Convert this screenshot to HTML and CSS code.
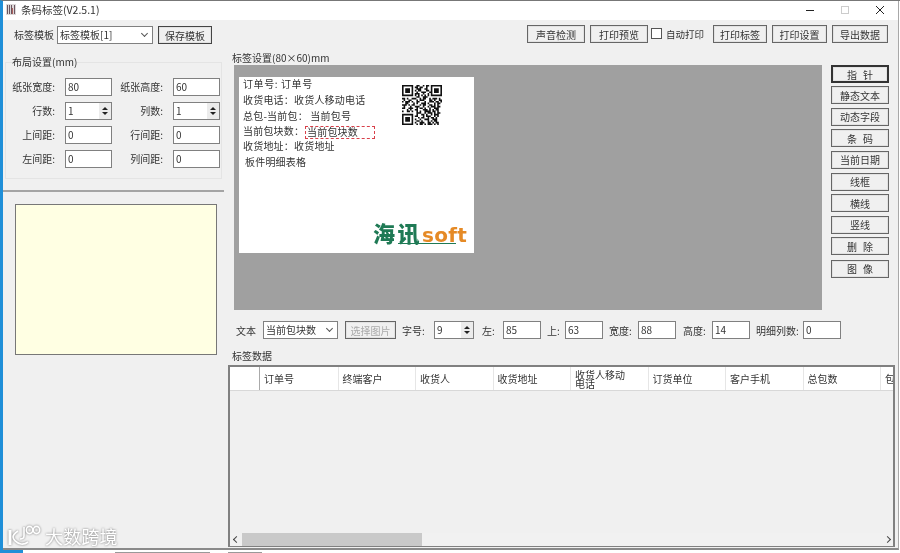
FILE: index.html
```html
<!DOCTYPE html>
<html lang="zh-CN">
<head>
    <meta charset="UTF-8">
    <meta name="viewport" content="width=device-width, initial-scale=1.0">
    <title>条码标签(V2.5.1)</title>
    <link rel="stylesheet" href="styles.css">
</head>
<body>
  <div class="window">
    <div class="titlebar">
      <svg class="app_icon" width="10" height="11" viewBox="0 0 10 11">
        <rect x="0" y="0" width="10" height="11" fill="#dcd8d8"/>
        <path d="M1.5 1v9M3.5 1v9M5.5 1v9M8.5 1v9" stroke="#6a5560" stroke-width="1"/>
        <path d="M6.5 4v6" stroke="#b0605d" stroke-width="1"/>
      </svg>
      <span class="app_title">条码标签(V2.5.1)</span>
      <div class="win_btns">
        <svg width="10" height="10" viewBox="0 0 10 10"><path d="M1 5.5h8" stroke="#222"/></svg>
        <svg width="10" height="10" viewBox="0 0 10 10"><rect x="1.5" y="1.5" width="7" height="7" fill="none" stroke="#ccc"/></svg>
        <svg width="10" height="10" viewBox="0 0 10 10"><path d="M1 1l8 8M9 1l-8 8" stroke="#222"/></svg>
      </div>
    </div>

    <div class="toolbar">
      <span class="tpl_label">标签模板</span>
      <div class="select tpl_select">标签模板[1]<i class="caret"></i></div>
      <button class="btn save_btn">保存模板</button>
      <div class="toolbar_right">
        <button class="btn w58">声音检测</button>
        <button class="btn w58">打印预览</button>
        <label class="auto_print"><i class="check"></i>自动打印</label>
        <button class="btn w54">打印标签</button>
        <button class="btn w55">打印设置</button>
        <button class="btn w56">导出数据</button>
      </div>
    </div>

    <div class="main">
      <div class="left_pane">
        <fieldset class="layout_box">
          <legend>布局设置(mm)</legend>
          <div class="layout_grid">
            <span>纸张宽度:</span><div class="input">80</div>
            <span>纸张高度:</span><div class="input">60</div>
            <span>行数:</span><div class="input spin">1<div class="spin_btns"><i class="up"></i><i class="down"></i></div></div>
            <span>列数:</span><div class="input spin">1<div class="spin_btns"><i class="up"></i><i class="down"></i></div></div>
            <span>上间距:</span><div class="input">0</div>
            <span>行间距:</span><div class="input">0</div>
            <span>左间距:</span><div class="input">0</div>
            <span>列间距:</span><div class="input">0</div>
          </div>
        </fieldset>
        <div class="left_sep"></div>
        <div class="preview_box"></div>
      </div>

      <div class="right_pane">
        <div class="section_title">标签设置(80×60)mm</div>
        <div class="design_row">
          <div class="canvas">
            <div class="label_page">
              <span class="field f1">订单号: 订单号</span>
              <span class="field f2">收货电话：收货人移动电话</span>
              <span class="field f3">总包-当前包： 当前包号</span>
              <span class="field f4">当前包块数：</span>
              <span class="field f4b">当前包块数</span>
              <span class="field f5">收货地址：收货地址</span>
              <span class="field f6">板件明细表格</span>
              <svg class="qr" width="40" height="40" viewBox="0 0 25 25">
                <path fill="none" stroke="#111" stroke-width="1" d="M0 .5h7m2 0h2m2 0h1m1 0h2m1 0h7M0 1.5h1m5 0h1m1 0h2m1 0h2m2 0h1m2 0h1m5 0h1M0 2.5h1m1 0h3m1 0h1m2 0h3m2 0h2m2 0h1m1 0h3m1 0h1M0 3.5h1m1 0h3m1 0h1m1 0h1m1 0h2m3 0h2m1 0h1m1 0h3m1 0h1M0 4.5h1m1 0h3m1 0h1m2 0h1m2 0h3m2 0h2m1 0h3m1 0h1M0 5.5h1m5 0h1m1 0h3m2 0h1m2 0h1m1 0h1m5 0h1M0 6.5h7m1 0h1m1 0h1m1 0h1m1 0h1m1 0h1m1 0h7M9 7.5h2m2 0h3M0 8.5h2m1 0h1m2 0h3m2 0h1m1 0h2m2 0h1m1 0h3m1 0h1M1 9.5h1m2 0h2m3 0h1m1 0h3m3 0h2m1 0h1m2 0h2M0 10.5h1m1 0h3m1 0h1m2 0h2m3 0h1m2 0h3m1 0h2m1 0h1M2 11.5h2m3 0h1m1 0h1m2 0h3m1 0h1m3 0h1m1 0h2M0 12.5h3m1 0h1m1 0h2m3 0h1m1 0h2m2 0h2m1 0h1m1 0h1M1 13.5h1m3 0h1m2 0h3m2 0h1m2 0h1m1 0h3m1 0h2M0 14.5h2m2 0h3m2 0h1m1 0h2m1 0h1m2 0h1m2 0h3M3 15.5h1m1 0h1m2 0h2m3 0h3m1 0h1m1 0h1m1 0h2M0 16.5h1m2 0h2m1 0h1m2 0h1m1 0h1m2 0h4m1 0h2m1 0h1M9 17.5h3m2 0h1m1 0h3m1 0h1m1 0h2M0 18.5h7m2 0h1m2 0h2m1 0h1m2 0h1m1 0h3M0 19.5h1m5 0h1m1 0h2m3 0h1m1 0h3m2 0h1m1 0h1M0 20.5h1m1 0h3m1 0h1m3 0h1m1 0h2m2 0h1m1 0h2m1 0h1M0 21.5h1m1 0h3m1 0h1m1 0h1m2 0h1m2 0h3m2 0h3M0 22.5h1m1 0h3m1 0h1m2 0h2m1 0h1m3 0h1m1 0h1m1 0h2M0 23.5h1m5 0h1m1 0h1m2 0h3m2 0h2m1 0h1m1 0h2M0 24.5h7m2 0h1m1 0h2m1 0h1m1 0h3m1 0h1m1 0h1"/>
              </svg>
              <div class="logo"><span class="logo_cn">海讯</span><span class="logo_en">soft</span></div>
            </div>
          </div>
          <div class="tools">
            <button class="btn tool active">指 针</button>
            <button class="btn tool">静态文本</button>
            <button class="btn tool">动态字段</button>
            <button class="btn tool">条 码</button>
            <button class="btn tool">当前日期</button>
            <button class="btn tool mt1">线框</button>
            <button class="btn tool">横线</button>
            <button class="btn tool">竖线</button>
            <button class="btn tool">删 除</button>
            <button class="btn tool mt1">图 像</button>
          </div>
        </div>

        <div class="props">
          <span>文本</span>
          <div class="select prop_select">当前包块数<i class="caret"></i></div>
          <button class="btn pic_btn" disabled>选择图片</button>
          <span class="lb32 ml6">字号:</span>
          <div class="input spin w40">9<div class="spin_btns"><i class="up"></i><i class="down"></i></div></div>
          <span class="lb21 ml8">左:</span>
          <div class="input w38">85</div>
          <span class="lb18 ml6">上:</span>
          <div class="input w38">63</div>
          <span class="lb29 ml6">宽度:</span>
          <div class="input w38">88</div>
          <span class="lb29 ml7">高度:</span>
          <div class="input w38">14</div>
          <span class="lb47 ml6">明细列数:</span>
          <div class="input w38">0</div>
        </div>

        <div class="section_title data_title">标签数据</div>
        <div class="data_grid">
          <div class="grid_head">
            <div class="cell first"></div>
            <div class="cell">订单号</div>
            <div class="cell">终端客户</div>
            <div class="cell">收货人</div>
            <div class="cell">收货地址</div>
            <div class="cell wrap">收货人移动电话</div>
            <div class="cell">订货单位</div>
            <div class="cell">客户手机</div>
            <div class="cell">总包数</div>
            <div class="cell">包</div>
          </div>
          <div class="grid_body"></div>
          <div class="hscroll">
            <span class="arrow_l"></span>
            <div class="track"><div class="thumb"></div></div>
            <span class="arrow_r"></span>
          </div>
        </div>
      </div>
    </div>
  </div>

  <div class="desktop_strip">
    <i class="strip_blue"></i>
    <i class="strip_ink ink1"></i>
    <i class="strip_ink ink2"></i>
  </div>

  <div class="watermark">
    <svg width="33" height="22" viewBox="0 0 33 22" fill="none" stroke="#fff" stroke-width="1.6">
      <path d="M2 5v15" stroke-width="3"/>
      <path d="M10 6c-3 2-5 4-5 6s3 6 8 7c3 .5 5-.5 7-2"/>
      <path d="M16 2v9c0 2-2 3-4 3"/>
      <ellipse cx="21.5" cy="5" rx="3.2" ry="3.6"/>
      <ellipse cx="28.5" cy="5" rx="3.2" ry="3.6"/>
    </svg>
    <span>大数跨境</span>
  </div>
</body>
</html>
```

FILE: styles.css
```css
*{
  box-sizing: border-box;
}

html, body{
  margin: 0;
  height: 100%;
  overflow: hidden;
}

body{
  width: 900px;
  height: 553px;
  background-color: #fff;
  font-family: "Noto Sans CJK SC", "Liberation Sans", sans-serif;
  font-size: 10px;
  color: #333;
  position: relative;
  border-left: 3px solid #1f8fd8;
  border-top: 1px solid #777;
}

.window{
  width: 896px;
  height: 549px;
  background-color: #f0f0f0;
  border-right: 1px solid #a8a8a8;
  border-bottom: 2px solid #8a8a8a;
  filter: blur(0.45px);
  overflow: hidden;
}

.titlebar{
  height: 19px;
  background-color: #fff;
  display: flex;
  align-items: center;
  padding: 0 0 2px 3px;
}

.app_title{
  margin-left: 5px;
  font-size: 10.5px;
  color: #333;
}

.win_btns{
  margin-left: auto;
  display: flex;
  gap: 25px;
  margin-right: 13px;
}

.toolbar{
  height: 32px;
  display: flex;
  align-items: flex-start;
  padding-top: 6px;
  padding-right: 10px;
}

.tpl_label{
  margin-left: 11px;
  width: 43px;
  line-height: 17px;
}

.select{
  position: relative;
  height: 18px;
  line-height: 16px;
  background-color: #fff;
  border: 1px solid #808080;
  padding-left: 2px;
  white-space: nowrap;
}

.tpl_select{
  width: 96px;
}

.prop_select{
  width: 75px;
}

.caret{
  position: absolute;
  right: 5px;
  top: 4px;
  width: 5px;
  height: 5px;
  border-right: 1px solid #555;
  border-bottom: 1px solid #555;
  transform: rotate(45deg);
}

.btn{
  font-family: inherit;
  font-size: 10px;
  color: #333;
  height: 18px;
  padding: 0;
  background-color: #f0f0f0;
  border: 1px solid #666;
  box-shadow: inset 0 0 0 1px #e2e2e2;
}

.save_btn{
  margin-left: 5px;
  width: 54px;
  border-color: #444;
}

.toolbar_right{
  margin-left: auto;
  display: flex;
  align-items: flex-start;
  gap: 5px;
  margin-top: -1px;
}

.w58{ width: 58px; }
.w54{ width: 54px; }
.w55{ width: 55px; }
.w56{ width: 56px; }

.auto_print{
  display: flex;
  align-items: center;
  height: 15px;
  gap: 4px;
  width: 57px;
  margin-left: -2px;
  margin-top: 1px;
  font-size: 9.5px;
  white-space: nowrap;
}

.check{
  width: 11px;
  height: 11px;
  flex: none;
  background-color: #fff;
  border: 1px solid #555;
}

.main{
  display: flex;
  height: 496px;
}

.left_pane{
  width: 221px;
  padding-top: 5px;
}

.layout_box{
  margin: 0 2px;
  padding: 0;
  height: 122px;
  border: 1px solid #e4e4e4;
}

.layout_box legend{
  margin-left: 6px;
  padding: 0;
  line-height: 10px;
}

.layout_grid{
  display: grid;
  grid-template-columns: 59px 47px 61px 47px;
  grid-auto-rows: 18px;
  row-gap: 6px;
  margin-top: 11px;
}

.layout_grid span{
  text-align: right;
  padding-right: 10px;
  line-height: 17px;
  white-space: nowrap;
}

.input{
  position: relative;
  height: 18px;
  line-height: 16px;
  padding-left: 2px;
  background-color: #fff;
  border: 1px solid #808080;
}

.spin_btns{
  position: absolute;
  right: 0;
  top: 0;
  bottom: 0;
  width: 12px;
  background-color: #ececec;
  display: flex;
  flex-direction: column;
  align-items: center;
  justify-content: center;
  gap: 2px;
}

.up{
  border-left: 3px solid transparent;
  border-right: 3px solid transparent;
  border-bottom: 3px solid #222;
}

.down{
  border-left: 3px solid transparent;
  border-right: 3px solid transparent;
  border-top: 3px solid #222;
}

.left_sep{
  height: 2px;
  margin-top: 11px;
  background-color: #a4a4a4;
}

.preview_box{
  width: 202px;
  height: 151px;
  margin: 12px 0 0 12px;
  background-color: #ffffe3;
  border: 1px solid #777;
}

.right_pane{
  flex: 1;
  min-width: 0;
}

.section_title{
  height: 13px;
  line-height: 12px;
  padding-left: 8px;
}

.design_row{
  display: flex;
}

.canvas{
  width: 588px;
  height: 245px;
  margin-left: 10px;
  padding: 12px 0 0 5px;
  background-color: #a0a0a0;
}

.label_page{
  position: relative;
  width: 235px;
  height: 176px;
  background-color: #fff;
}

.field{
  position: absolute;
  left: 4px;
  line-height: 12px;
  letter-spacing: .2px;
  white-space: nowrap;
}

.f1{ top: 1px; letter-spacing: .6px; }
.f2{ top: 17px; }
.f3{ top: 33px; }
.f4{ top: 48px; }
.f4b{
  top: 49px;
  left: 66px;
  width: 70px;
  height: 13px;
  padding-left: 1px;
  border: 1px dashed #d8404a;
  line-height: 10px;
}
.f5{ top: 63px; }
.f6{ top: 79px; left: 6px; }

.qr{
  position: absolute;
  left: 163px;
  top: 8px;
}

.logo{
  position: absolute;
  left: 134px;
  top: 143px;
  display: flex;
  align-items: baseline;
  line-height: 24px;
  white-space: nowrap;
}

.logo::after{
  content: "";
  position: absolute;
  left: 25px;
  top: 23px;
  width: 58px;
  height: 1px;
  background-color: #1f7a55;
}

.logo_cn{
  font-size: 22px;
  font-weight: 900;
  color: #1f7a55;
  letter-spacing: 2.5px;
}

.logo_en{
  font-family: "DejaVu Sans", sans-serif;
  font-size: 20px;
  font-weight: 700;
  color: #e58a26;
  letter-spacing: .3px;
}

.tools{
  margin-left: 9px;
  width: 58px;
  display: flex;
  flex-direction: column;
  gap: 3.4px;
}

.tool{
  height: 18px;
  flex: none;
  word-spacing: 4px;
}

.active{
  border: 2px solid #333;
}

.mt1{
  margin-top: 1px;
}

.props{
  display: flex;
  align-items: center;
  margin-top: 11px;
  padding-left: 12px;
  height: 18px;
  white-space: nowrap;
}

.props span:first-child{
  margin-right: 7px;
}

.props .select{
  margin-right: 7px;
}

.pic_btn{
  width: 51px;
  color: #aaa;
}

.lb18{ width: 18px; }
.lb21{ width: 21px; }
.lb29{ width: 29px; }
.lb32{ width: 32px; }
.lb47{ width: 47px; }
.ml6{ margin-left: 6px; }
.ml7{ margin-left: 7px; }
.ml8{ margin-left: 8px; }
.w38{ width: 38px; }
.w40{ width: 40px; }

.data_title{
  margin-top: 11px;
  height: 15px;
}

.data_grid{
  width: 667px;
  height: 182px;
  margin-left: 4px;
  border: 2px solid #808080;
  border-bottom-width: 1px;
  background-color: #f0f0f0;
  display: flex;
  flex-direction: column;
  overflow: hidden;
}

.grid_head{
  display: flex;
  height: 24px;
  flex: none;
  background-color: #fff;
  border-bottom: 1px solid #d8d8d8;
}

.cell{
  width: 77.5px;
  flex: none;
  padding-left: 4px;
  line-height: 23px;
  border-left: 1px solid #e6e6e6;
  white-space: nowrap;
}

.first{
  width: 30px;
  border-left: 0;
  border-right: 1px solid #aaa;
}

.first + .cell{
  border-left: 0;
}

.wrap{
  white-space: normal;
  line-height: 9px;
  padding-top: 3px;
  padding-right: 14px;
}

.grid_body{
  flex: 1;
}

.hscroll{
  height: 13px;
  flex: none;
  background-color: #f1f1f1;
  display: flex;
  align-items: center;
}

.arrow_l, .arrow_r{
  width: 12px;
  flex: none;
  position: relative;
  height: 13px;
}

.arrow_l::before, .arrow_r::before{
  content: "";
  position: absolute;
  top: 4px;
  width: 4px;
  height: 4px;
  border-left: 1.5px solid #444;
  border-bottom: 1.5px solid #444;
}

.arrow_l::before{
  left: 4px;
  transform: rotate(45deg);
}

.arrow_r::before{
  left: 4px;
  transform: rotate(225deg);
}

.track{
  flex: 1;
  height: 13px;
}

.thumb{
  width: 180px;
  height: 13px;
  background-color: #c9c9c9;
}

.desktop_strip{
  height: 3px;
  display: flex;
  align-items: flex-end;
}

.strip_blue{
  width: 20px;
  height: 3px;
  background-color: #1f8fd8;
}

.strip_ink{
  height: 1px;
  background-color: #999;
}

.ink1{
  width: 95px;
  margin-left: 92px;
}

.ink2{
  width: 34px;
  margin-left: 18px;
}

.watermark{
  position: absolute;
  left: 5px;
  top: 524px;
  display: flex;
  align-items: center;
  gap: 4px;
  color: #fff;
  font-size: 18px;
  line-height: 22px;
  letter-spacing: .2px;
  filter: drop-shadow(0 0 1px #777);
}
```
